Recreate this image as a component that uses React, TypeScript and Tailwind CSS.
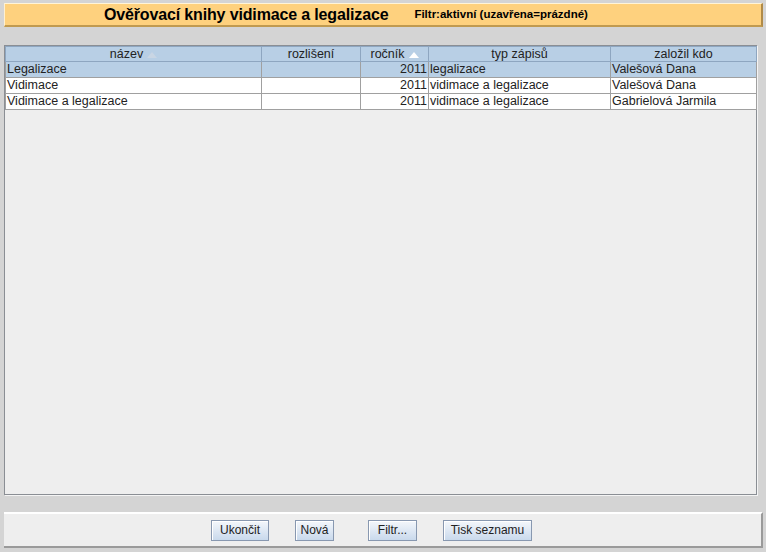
const rows = [
  { nazev: 'Legalizace', rozliseni: '', rocnik: '2011', typ: 'legalizace', kdo: 'Valešová Dana', selected: true },
  { nazev: 'Vidimace', rozliseni: '', rocnik: '2011', typ: 'vidimace a legalizace', kdo: 'Valešová Dana', selected: false },
  { nazev: 'Vidimace a legalizace', rozliseni: '', rocnik: '2011', typ: 'vidimace a legalizace', kdo: 'Gabrielová Jarmila', selected: false },
]

function SortArrow({ faint }: { faint?: boolean }) {
  return (
    <svg width="10" height="6" viewBox="0 0 10 6" className="ml-1 inline-block align-middle">
      <path d="M0 6 L5 0 L10 6 Z" fill={faint ? '#c9d6e4' : '#ffffff'} />
    </svg>
  )
}

function Button({ label, w }: { label: string; w: string }) {
  return (
    <button
      className={`h-[21px] ${w} border border-[#8898b0] bg-gradient-to-b from-[#f4f7fb] to-[#c9d9ec] text-[12px] text-[#222] shadow-[inset_1px_1px_0_#ffffff]`}
    >
      {label}
    </button>
  )
}

export default function App() {
  return (
    <div className="h-[552px] w-[766px] overflow-hidden bg-[#d4d4d4] font-['Liberation_Sans',Arial,sans-serif]">
      {/* title bar */}
      <div className="ml-[4px] mt-[3px] flex h-[24px] w-[759px] items-center border-b-2 border-r-2 border-t border-l border-b-[#c09a50] border-r-[#b08a48] border-t-[#fff4d8] border-l-[#fff0d0] bg-[#fed17e]">
        <span className="ml-[99px] text-[16px] font-bold tracking-[-0.15px] text-black">Ověřovací knihy vidimace a legalizace</span>
        <span className="ml-[26px] text-[11.5px] font-bold text-black">Filtr:aktivní (uzavřena=prázdné)</span>
      </div>

      {/* table panel */}
      <div className="ml-[4px] mt-[18px] h-[450px] w-[753px] border border-[#8a8e94] bg-[#eeeeee] shadow-[1px_1px_0_#f4f4f4]">
        <table className="w-[751px] table-fixed border-collapse text-[12.5px] text-[#222]">
          <colgroup>
            <col className="w-[256px]" />
            <col className="w-[99px]" />
            <col className="w-[68px]" />
            <col className="w-[182px]" />
            <col className="w-[146px]" />
          </colgroup>
          <thead>
            <tr className="h-[15px] bg-[#b8cfe5] leading-[14px]">
              <th className="border border-[#8ea6c0] p-0 font-normal">
                název
                <SortArrow faint />
              </th>
              <th className="border border-[#8ea6c0] p-0 font-normal">rozlišení</th>
              <th className="border border-[#8ea6c0] p-0 font-normal">
                ročník
                <SortArrow />
              </th>
              <th className="border border-[#8ea6c0] p-0 font-normal">typ zápisů</th>
              <th className="border border-[#8ea6c0] p-0 font-normal">založil kdo</th>
            </tr>
          </thead>
          <tbody>
            {rows.map((r) => (
              <tr key={r.nazev} className={`h-[16px] leading-[15px] ${r.selected ? 'bg-[#b8cfe5]' : 'bg-white'}`}>
                <td className="border border-[#a0a0a0] px-[1px] py-0">{r.nazev}</td>
                <td className="border border-[#a0a0a0] px-[1px] py-0">{r.rozliseni}</td>
                <td className="border border-[#a0a0a0] px-[1px] py-0 text-right">{r.rocnik}</td>
                <td className="border border-[#a0a0a0] px-[1px] py-0">{r.typ}</td>
                <td className="border border-[#a0a0a0] px-[1px] py-0">{r.kdo}</td>
              </tr>
            ))}
          </tbody>
        </table>
      </div>

      {/* button bar */}
      <div className="ml-[4px] mt-[17px] flex h-[36px] w-[759px] items-center border-b-2 border-r-2 border-t-2 border-b-[#9a9a9a] border-r-[#9a9a9a] border-t-white bg-[#eeeeee] pl-[207px]">
        <Button label="Ukončit" w="w-[58px]" />
        <div className="w-[26px]" />
        <Button label="Nová" w="w-[39px]" />
        <div className="w-[34px]" />
        <Button label="Filtr..." w="w-[49px]" />
        <div className="w-[26px]" />
        <Button label="Tisk seznamu" w="w-[89px]" />
      </div>
    </div>
  )
}
